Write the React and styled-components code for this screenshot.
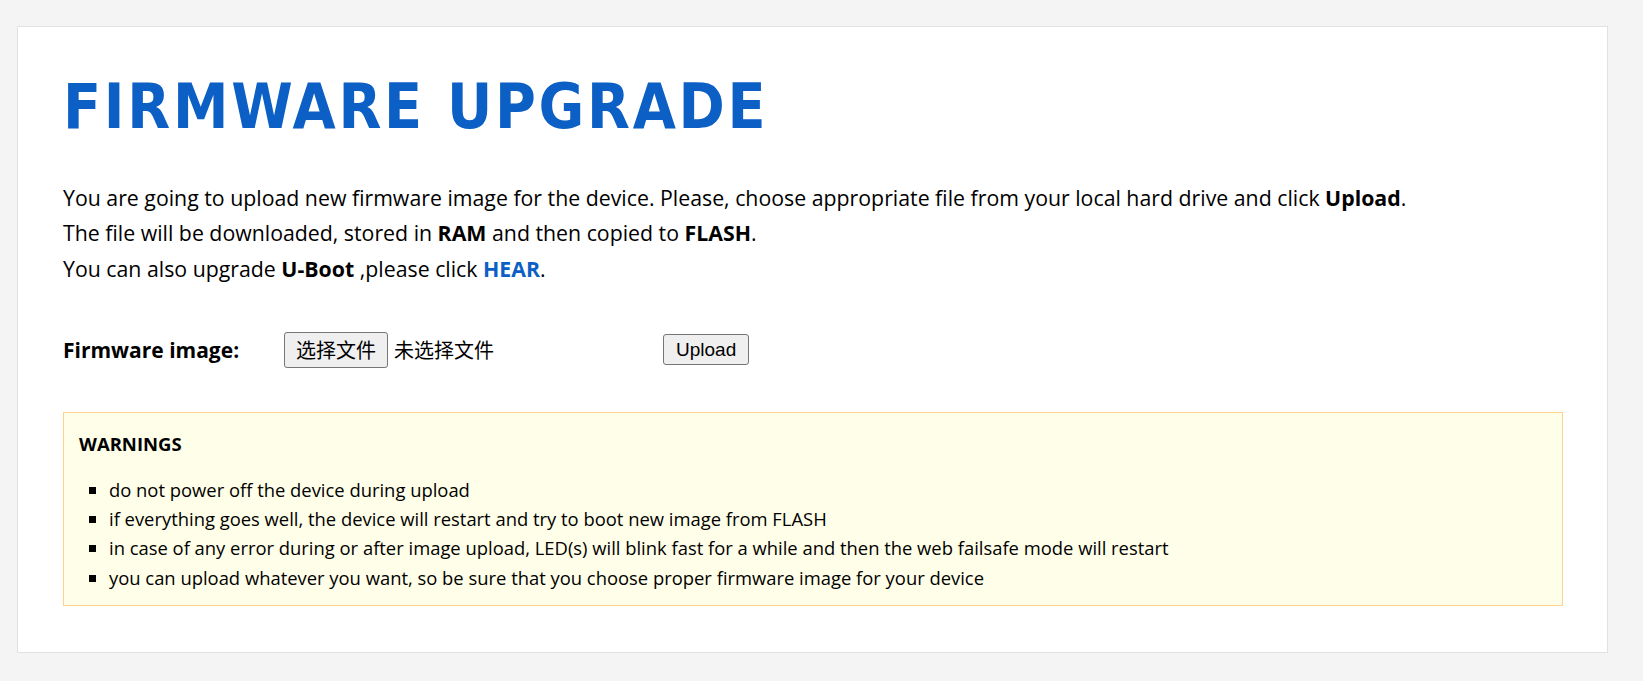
import React from "react";
import styled, { createGlobalStyle } from "styled-components";

const Global = createGlobalStyle`
  html, body { margin: 0; padding: 0; background: #f4f4f4; }
  body { font-family: "Open Sans", "Noto Sans", "Noto Sans CJK SC", sans-serif; color: #000; }
`;

const Page = styled.div`
  padding: 26px 35px 30px 17px;
`;

const Card = styled.main`
  background: #fff;
  border: 1px solid #e1e1e1;
  padding: 35px 44px 46px 45px;
`;

const Title = styled.h1`
  margin: 0 0 28px;
  font-family: "DejaVu Sans Condensed", "DejaVu Sans", Verdana, sans-serif;
  font-weight: bold;
  font-size: 62px;
  line-height: 90px;
  letter-spacing: 2.7px;
  color: #0b5fc5;
`;

const Para = styled.p`
  margin: 0;
  font-size: 21.3px;
  line-height: 35.3px;
`;

const Link = styled.a`
  color: #0b5fc5;
  font-weight: bold;
  text-decoration: none;
`;

const Row = styled.form`
  display: flex;
  align-items: center;
  margin: 46px 0 44px;
`;

const Label = styled.label`
  width: 221px;
  font-weight: bold;
  font-size: 21px;
`;

const FileField = styled.div`
  width: 379px;
  display: flex;
  align-items: center;
  gap: 6px;
  font-family: "Noto Sans CJK SC", sans-serif;
  font-size: 20px;
`;

const NativeButton = styled.button`
  background: #efefef;
  border: 1px solid #767676;
  border-radius: 3px;
  color: #000;
  font-family: ${(p) => (p.$cjk ? '"Noto Sans CJK SC", sans-serif' : '"Liberation Sans", Arial, sans-serif')};
  font-size: ${(p) => (p.$cjk ? 20 : 19)}px;
  height: ${(p) => p.$h}px;
  padding: 0 ${(p) => p.$px}px;
  line-height: 1;
  cursor: default;
`;

const Warnings = styled.section`
  background: #fffee8;
  border: 1px solid #ffd38c;
  padding: 16px 15px 13px;
`;

const WarnTitle = styled.h3`
  margin: 0 0 17px;
  font-size: 18.5px;
  font-weight: bold;
  line-height: 29px;
`;

const List = styled.ul`
  margin: 0;
  padding-left: 30px;
  list-style: square;
  font-size: 18.4px;
  line-height: 29.3px;
`;

export default function App() {
  return (
    <>
      <Global />
      <Page>
        <Card>
          <Title>FIRMWARE UPGRADE</Title>
          <Para>
            You are going to upload new firmware image for the device. Please, choose appropriate file from your local hard drive and click <b>Upload</b>.
          </Para>
          <Para>
            The file will be downloaded, stored in <b>RAM</b> and then copied to <b>FLASH</b>.
          </Para>
          <Para>
            You can also upgrade <b>U-Boot</b> ,please click <Link href="#">HEAR</Link>.
          </Para>
          <Row onSubmit={(e) => e.preventDefault()}>
            <Label>Firmware image:</Label>
            <FileField>
              <NativeButton type="button" $cjk $h={36} $px={11}>选择文件</NativeButton>
              <span>未选择文件</span>
            </FileField>
            <NativeButton type="submit" $h={31} $px={12}>Upload</NativeButton>
          </Row>
          <Warnings>
            <WarnTitle>WARNINGS</WarnTitle>
            <List>
              <li>do not power off the device during upload</li>
              <li>if everything goes well, the device will restart and try to boot new image from FLASH</li>
              <li>in case of any error during or after image upload, LED(s) will blink fast for a while and then the web failsafe mode will restart</li>
              <li>you can upload whatever you want, so be sure that you choose proper firmware image for your device</li>
            </List>
          </Warnings>
        </Card>
      </Page>
    </>
  );
}
